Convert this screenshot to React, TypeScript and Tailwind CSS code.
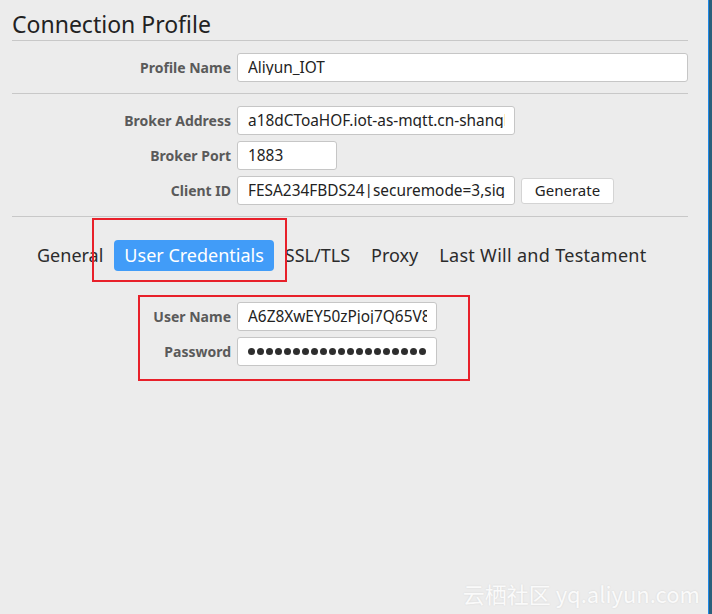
import React from "react";

const font = { fontFamily: '"Noto Sans", "Open Sans", "Noto Sans CJK SC", sans-serif' };

function Field({ value, width, dots }: { value: string; width: string; dots?: boolean }) {
  return (
    <div className={`h-[29px] ${width} bg-white border border-[#c6c6c6] rounded-[3px] pl-[10px] pr-[9px] flex items-center`}>
      <div className="overflow-hidden whitespace-nowrap w-full text-[15.4px] text-[#222] leading-none">
        {dots ? (
          <div className="flex gap-[2px]">
            {Array.from({ length: 24 }).map((_, i) => (
              <span key={i} className="shrink-0 w-[7px] h-[7px] rounded-full bg-[#2e2e2e]" />
            ))}
          </div>
        ) : (
          value
        )}
      </div>
    </div>
  );
}

function Row({ label, children }: { label: string; children: React.ReactNode }) {
  return (
    <div className="flex items-center">
      <div className="w-[225px] shrink-0 pr-[6px] text-right text-[14px] font-bold text-[#5a5a5a]">{label}</div>
      {children}
    </div>
  );
}

export default function App() {
  return (
    <div className="relative w-[712px] h-[614px] bg-[#ececec] flex overflow-hidden" style={font}>
      <div className="w-[708px] h-full pl-[12px] pr-[20px]">
        <div className="pt-[8px] h-[40px] text-[23px] text-[#222] leading-[32px]">Connection Profile</div>
        <div className="h-px bg-[#c8c8c8]" />
        <div className="pt-[12px] pb-[11px]">
          <Row label="Profile Name">
            <Field value="Aliyun_IOT" width="w-[451px]" />
          </Row>
        </div>
        <div className="h-px bg-[#c8c8c8]" />
        <div className="pt-[12px] pb-[11px] flex flex-col gap-[6px]">
          <Row label="Broker Address">
            <Field value="a18dCToaHOF.iot-as-mqtt.cn-shanghai.aliyuncs.com" width="w-[278px]" />
          </Row>
          <Row label="Broker Port">
            <Field value="1883" width="w-[100px]" />
          </Row>
          <Row label="Client ID">
            <Field value="FESA234FBDS24|securemode=3,signmethod=hmacsha1|" width="w-[278px]" />
            <div className="ml-[6px] h-[26px] w-[93px] bg-white border border-[#d4d4d4] rounded-[3px] flex items-center justify-center text-[15px] text-[#222]">
              Generate
            </div>
          </Row>
        </div>
        <div className="h-px bg-[#c8c8c8]" />
        <div className="pt-[23px] pl-[15px] flex items-center gap-[1px] text-[18px] text-[#2b2b2b]">
          <div className="px-[10px] h-[31px] flex items-center">General</div>
          <div className="px-[10px] h-[31px] flex items-center bg-[#419cf8] text-white rounded-[4px]">User Credentials</div>
          <div className="px-[10px] h-[31px] flex items-center">SSL/TLS</div>
          <div className="px-[10px] h-[31px] flex items-center">Proxy</div>
          <div className="px-[10px] h-[31px] flex items-center tracking-[0.3px]">Last Will and Testament</div>
        </div>
        <div className="pt-[31px] flex flex-col gap-[6px]">
          <Row label="User Name">
            <Field value="A6Z8XwEY50zPjoj7Q65V8nRdP" width="w-[200px]" />
          </Row>
          <Row label="Password">
            <Field value="" dots width="w-[200px]" />
          </Row>
        </div>
      </div>
      <div className="w-px h-full bg-[#1e88e5]" />
      <div className="flex-1 h-full bg-[#2a5f7c]" />

      <div className="absolute left-[92px] top-[218px] w-[195px] h-[64px] border-2 border-[#e8202a]" />
      <div className="absolute left-[138px] top-[295px] w-[332px] h-[86px] border-2 border-[#e8202a]" />

      <div
        className="absolute right-[12px] top-[577px] text-[22px] text-[#fafafa] whitespace-nowrap"
        style={{ fontFamily: '"Noto Sans CJK SC", "Noto Sans", sans-serif', textShadow: "0 0 2px rgba(0,0,0,0.1)" }}
      >
        云栖社区 yq.aliyun.com
      </div>
    </div>
  );
}
